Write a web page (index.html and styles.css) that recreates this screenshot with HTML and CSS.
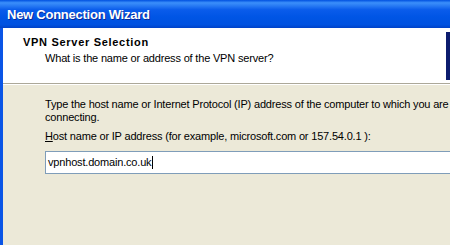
FILE: index.html
```html
<!DOCTYPE html>
<html>
<head>
<meta charset="utf-8">
<link rel="stylesheet" href="styles.css">
</head>
<body>
<div class="window">
  <div class="titlebar"><span class="title">New Connection Wizard</span></div>
  <div class="frame">
    <div class="header">
      <div class="header-text">
        <div class="h-title">VPN Server Selection</div>
        <div class="h-sub">What is the name or address of the VPN server?</div>
      </div>
      <div class="h-image"><span class="h-mark"></span></div>
    </div>
    <div class="content">
      <p class="desc">Type the host name or Internet Protocol (IP) address of the computer to which you are connecting.</p>
      <div class="label"><u>H</u>ost name or IP address (for example, microsoft.com or 157.54.0.1 ):</div>
      <div class="field">vpnhost.domain.co.uk<span class="caret"></span></div>
    </div>
  </div>
</div>
</body>
</html>
```

FILE: styles.css
```css
html, body {
  margin: 0;
  padding: 0;
  width: 450px;
  height: 245px;
  overflow: hidden;
  background: #ECE9D8;
}
.window {
  width: 500px;
  height: 245px;
  display: flex;
  flex-direction: column;
  font-family: "Liberation Sans", Arial, sans-serif;
  font-size: 11px;
  letter-spacing: -0.18px;
  color: #000;
}
.titlebar {
  height: 28px;
  flex: none;
  display: flex;
  align-items: center;
  padding-left: 7px;
  background: linear-gradient(to bottom, #0050E0 0%, #3B8FFA 10%, #2D80F5 18%, #0A5CEB 35%, #0055E5 60%, #0052E0 88%, #0042C8 100%);
}
.title {
  color: #fff;
  font-weight: bold;
  font-size: 13px;
  letter-spacing: -0.25px;
  text-shadow: 1px 1px 0 #0A2A9A;
  padding-top: 1px;
}
.frame {
  flex: 1;
  display: flex;
  flex-direction: column;
  border-left: 3px solid #0A55E6;
  background: #ECE9D8;
}
.header {
  height: 55px;
  flex: none;
  display: flex;
  background: #fff;
  border-bottom: 1px solid #ACA899;
  box-shadow: 0 1px 0 #fff;
  padding-left: 20px;
  padding-right: 5px;
}
.header-text {
  flex: 1;
  padding-top: 8px;
}
.h-title {
  font-weight: bold;
  line-height: 13px;
  letter-spacing: 0.7px;
}
.h-sub {
  line-height: 13px;
  margin-top: 3px;
  padding-left: 22px;
}
.h-image {
  width: 49px;
  height: 48px;
  margin-top: 4px;
  background: #0C1C6E;
  position: relative;
}
.h-mark {
  position: absolute;
  left: 4px;
  top: 22px;
  width: 2px;
  height: 5px;
  background: #fff;
}
.content {
  margin-top: 1px;
  padding: 13px 0 0 42px;
}
.desc {
  margin: 0;
  line-height: 13px;
  width: 420px;
}
.label {
  margin-top: 6px;
  line-height: 13px;
}
.field {
  margin-top: 8px;
  width: 436px;
  box-sizing: border-box;
  height: 23px;
  border: 1px solid #7F9DB9;
  background: #fff;
  padding-left: 2px;
  padding-bottom: 1px;
  display: flex;
  align-items: center;
}
.caret {
  display: inline-block;
  width: 1px;
  height: 13px;
  background: #000;
  margin-left: 1px;
}
```
